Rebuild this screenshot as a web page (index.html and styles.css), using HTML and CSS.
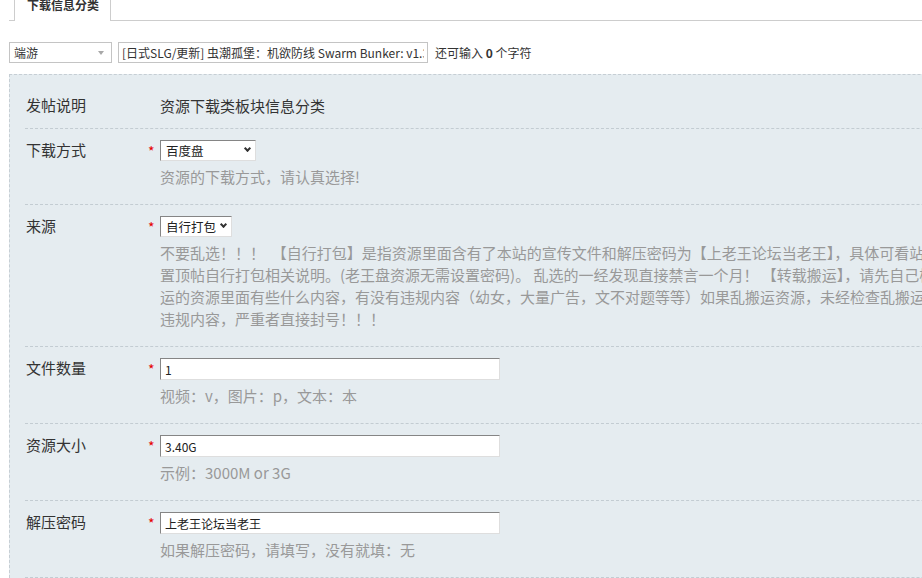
FILE: index.html
```html
<!DOCTYPE html>
<html lang="zh-CN">
<head>
    <meta charset="UTF-8">
    <title>发表帖子 - 下载信息分类</title>
    <link rel="stylesheet" href="styles.css">
</head>
<body>
    <div class="tabbar">
        <span class="tab">下载信息分类</span>
    </div>

    <div class="titlebar">
        <div class="typesel">
            <span>端游</span>
            <i class="arrow"></i>
        </div>
        <input class="title" type="text" value="[日式SLG/更新] 虫潮孤堡：机欲防线 Swarm Bunker: v1.3.2 官方中文版 [PC+3.4G]">
        <span class="count">还可输入 <b>0</b> 个字符</span>
    </div>

    <div class="panel">
        <div class="row row-first">
            <div class="lbl">发帖说明</div>
            <div class="req"></div>
            <div class="fld">资源下载类板块信息分类</div>
        </div>

        <div class="row">
            <div class="lbl">下载方式</div>
            <div class="req">*</div>
            <div class="fld">
                <span class="selwrap">
                    <select class="sel sel-pan">
                        <option>百度盘</option>
                        <option>老王盘</option>
                        <option>其他</option>
                    </select>
                </span>
                <p class="tip">资源的下载方式，请认真选择!</p>
            </div>
        </div>

        <div class="row">
            <div class="lbl">来源</div>
            <div class="req">*</div>
            <div class="fld">
                <span class="selwrap">
                    <select class="sel sel-src">
                        <option>自行打包</option>
                        <option>转载搬运</option>
                    </select>
                </span>
                <p class="tip">不要乱选！！！ &nbsp;【自行打包】是指资源里面含有了本站的宣传文件和解压密码为【上老王论坛当老王】，具体可看站务区<br>置顶帖自行打包相关说明。(老王盘资源无需设置密码)。 乱选的一经发现直接禁言一个月！ 【转载搬运】，请先自己检查一下搬<br>运的资源里面有些什么内容，有没有违规内容（幼女，大量广告，文不对题等等）如果乱搬运资源，未经检查乱搬运发现<br>违规内容，严重者直接封号！！！</p>
            </div>
        </div>

        <div class="row">
            <div class="lbl">文件数量</div>
            <div class="req">*</div>
            <div class="fld">
                <input class="px" type="text" value="1">
                <p class="tip">视频：v，图片：p，文本：本</p>
            </div>
        </div>

        <div class="row">
            <div class="lbl">资源大小</div>
            <div class="req">*</div>
            <div class="fld">
                <input class="px" type="text" value="3.40G">
                <p class="tip">示例：3000M or 3G</p>
            </div>
        </div>

        <div class="row">
            <div class="lbl">解压密码</div>
            <div class="req">*</div>
            <div class="fld">
                <input class="px" type="text" value="上老王论坛当老王">
                <p class="tip">如果解压密码，请填写，没有就填：无</p>
            </div>
        </div>
    </div>
</body>
</html>
```

FILE: styles.css
```css
body {
    margin: 0;
    font-family: "Noto Sans CJK SC", sans-serif;
    font-size: 12px;
    color: #333;
    background: #fff;
    overflow: hidden;
}
.tabbar {
    margin-left: 9px;
    height: 20px;
    border-bottom: 1px solid #cdcdcd;
    padding-left: 5px;
}
.tab {
    display: inline-block;
    box-sizing: border-box;
    height: 21px;
    padding: 0 11px 0 12px;
    border: 1px solid #cdcdcd;
    border-top: 0;
    border-bottom: 0;
    background: #fff;
    font-weight: bold;
    line-height: 9px;
    vertical-align: top;
}
.titlebar {
    display: flex;
    align-items: center;
    margin: 21px 0 0 9px;
    height: 21px;
}
.typesel {
    position: relative;
    box-sizing: border-box;
    width: 103px;
    height: 21px;
    border: 1px solid #c4c4c4;
    background: #fff;
    padding-left: 4px;
    line-height: 19px;
}
.typesel .arrow {
    position: absolute;
    right: 7px;
    top: 8px;
    border-left: 3px solid transparent;
    border-right: 3px solid transparent;
    border-top: 4px solid #a8a8a8;
}
.title {
    box-sizing: border-box;
    width: 310px;
    height: 21px;
    margin-left: 6px;
    padding: 0 3px;
    border: 1px solid #c4c4c4;
    font-family: inherit;
    font-size: 12px;
    color: #333;
    outline: none;
}
.count {
    margin-left: 7px;
}
.panel {
    width: 1200px;
    margin: 11px 0 0 9px;
    padding-left: 15px;
    background: #e5ecf0;
    border-top: 1px dashed #c6ced4;
    border-left: 1px dashed #c6ced4;
}
.row {
    display: grid;
    grid-template-columns: 123px 12px 1fr;
    padding: 11px 0 16px;
    border-bottom: 1px dashed #c3ccd2;
    font-size: 15px;
    line-height: 22px;
}
.row-first {
    padding: 20px 0 11px;
}
.lbl {
    padding-left: 1px;
    color: #333;
    line-height: 20px;
}
.req {
    color: #e60000;
    font-size: 14px;
    line-height: 22px;
}
.fld {
    color: #333;
}
.selwrap {
    position: relative;
    display: block;
    width: max-content;
}
.selwrap::after {
    content: "";
    position: absolute;
    right: 6px;
    top: 6px;
    width: 3px;
    height: 3px;
    border-right: 2px solid #333;
    border-bottom: 2px solid #333;
    transform: rotate(45deg);
    pointer-events: none;
}
.sel {
    display: block;
    box-sizing: border-box;
    height: 21px;
    margin: 0;
    padding: 0 0 0 5px;
    appearance: none;
    font-family: inherit;
    font-size: 12.5px;
    line-height: 19px;
    color: #222;
    background: #fff;
    border: 1px solid;
    border-color: #858585 #dedede #dedede #858585;
    outline: none;
}
.sel-pan {
    width: 96px;
}
.sel-src {
    width: 72px;
}
.px {
    display: block;
    box-sizing: border-box;
    width: 340px;
    height: 22px;
    margin: 0;
    padding: 0 4px;
    font-family: inherit;
    font-size: 12px;
    color: #222;
    background: #fff;
    border: 1px solid;
    border-color: #858585 #dedede #dedede #858585;
    outline: none;
}
.tip {
    margin: 5px 0 0;
    color: #999;
    line-height: 22px;
}
```
